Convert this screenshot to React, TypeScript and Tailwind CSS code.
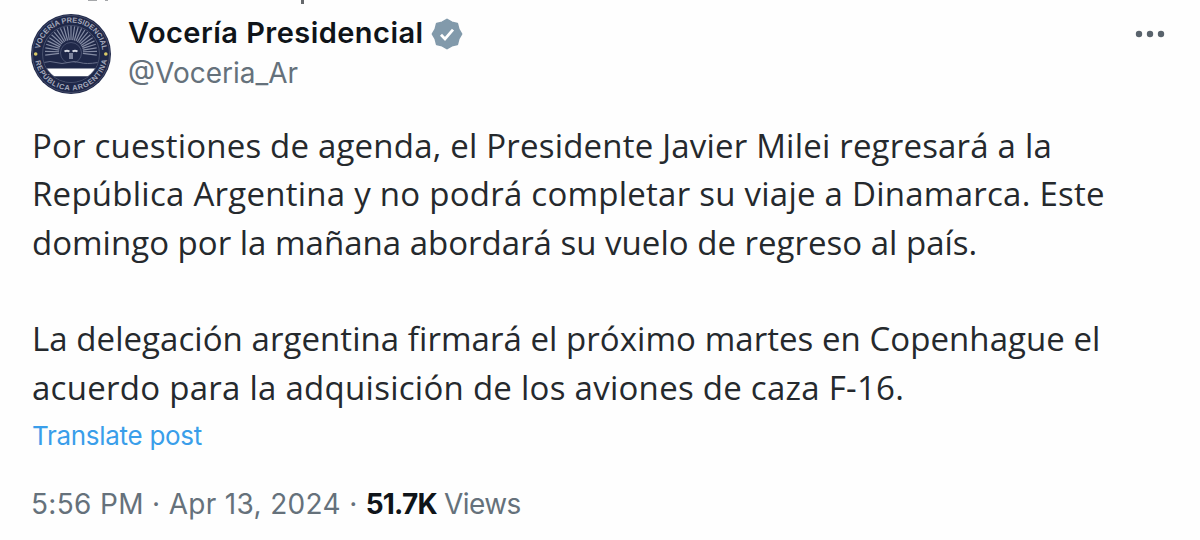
import { type ReactNode } from "react";

const paragraphs = [
  [
    { text: "Por cuestiones de agenda, el Presidente Javier Milei regresará a la", tracking: "tracking-[0.2px]" },
    { text: "República Argentina y no podrá completar su viaje a Dinamarca. Este", tracking: "tracking-[0.25px]" },
    { text: "domingo por la mañana abordará su vuelo de regreso al país.", tracking: "tracking-[0.01px]" },
  ],
  [
    { text: "La delegación argentina firmará el próximo martes en Copenhague el", tracking: "tracking-[0.055px]" },
    { text: "acuerdo para la adquisición de los aviones de caza F-16.", tracking: "tracking-[0.27px]" },
  ],
];

// sunburst spreads just past the horizontal on both sides
const rays = Array.from({ length: 25 }, (_, i) => Math.PI - 0.12 + (i * (Math.PI + 0.24)) / 24);

function Seal() {
  return (
    <svg viewBox="0 0 82 82" className="size-[82px] shrink-0" role="img" aria-label="Vocería Presidencial">
      <defs>
        <path id="seal-top" d="M9.5 41a31.5 31.5 0 0 1 63 0" />
        <path id="seal-bottom" d="M4.6 41a36.4 36.4 0 0 0 72.8 0" />
        <clipPath id="seal-inner">
          <circle cx="41" cy="41" r="28" />
        </clipPath>
      </defs>
      <circle cx="41" cy="41" r="40" fill="#1f2849" />
      <circle cx="41" cy="41" r="38.6" fill="none" stroke="#515975" strokeWidth="0.7" />
      <circle cx="41" cy="41" r="28.5" fill="none" stroke="#515975" strokeWidth="0.8" />
      <g clipPath="url(#seal-inner)">
        {rays.map((a) => (
          <line
            key={a}
            x1={41 + Math.cos(a) * 12}
            y1={39 + Math.sin(a) * 12}
            x2={41 + Math.cos(a) * 26}
            y2={39 + Math.sin(a) * 26}
            stroke="#858ca4"
            strokeWidth="1.2"
          />
        ))}
        <circle cx="41" cy="40" r="10.5" fill="#1f2849" stroke="#59617f" strokeWidth="0.7" />
        <path d="M34.5 38.5q2.5-1.5 5 0M42.5 38.5q2.5-1.5 5 0" fill="none" stroke="#d5d8e2" strokeWidth="2" />
        <path d="M39 40v6h4v-6" fill="#7c839c" />
        <path d="M12 50h58v6H12z" fill="#1f2849" />
        <path d="M14 49.5q6-2 12 0t12 0 12 0 18 0" fill="none" stroke="#69708b" strokeWidth="1" />
        <path d="M12 55.5h58v8H12z" fill="#fff" />
        <path d="M12 63.5h58V72H12z" fill="#1f2849" />
      </g>
      <g fill="#a4a9bb" fontFamily="Liberation Sans, sans-serif" fontSize="7.4" fontWeight="700">
        <text>
          <textPath href="#seal-top" startOffset="5" textLength="90">VOCERÍA PRESIDENCIAL</textPath>
        </text>
        <text>
          <textPath href="#seal-bottom" startOffset="7" textLength="101">REPÚBLICA ARGENTINA</textPath>
        </text>
      </g>
      <circle cx="5.7" cy="41" r="1.8" fill="#d9ca69" />
      <circle cx="75.8" cy="41" r="1.8" fill="#d9ca69" />
    </svg>
  );
}

function VerifiedBadge() {
  return (
    <svg viewBox="0 0 32 32" className="ml-[7px] mt-[1px] size-[32px]" aria-label="Verified account">
      <path
        d="M16 1.6 20.8 4.4 26.2 5.8 27.6 11.2 30.4 16 27.6 20.8 26.2 26.2 20.8 27.6 16 30.4 11.2 27.6 5.8 26.2 4.4 20.8 1.6 16 4.4 11.2 5.8 5.8 11.2 4.4z"
        fill="#829aab"
        stroke="#829aab"
        strokeWidth="2"
        strokeLinejoin="round"
      />
      <path d="m10 16.8 4 4.2 8-9.3" fill="none" stroke="#fff" strokeWidth="2.8" />
    </svg>
  );
}

function Line({ className, children }: { className: string; children: ReactNode }) {
  return <span className={`block whitespace-nowrap ${className}`}>{children}</span>;
}

export default function App() {
  return (
    <article className="h-[540px] w-[1200px] overflow-hidden bg-[#fefefe] font-['Inter',sans-serif] text-[#0f1419]">
      {/* descenders of the line cut off by the top edge */}
      <svg className="block h-[13px] w-full" viewBox="0 0 1200 13" aria-hidden="true">
        <path d="M88 0h9v1h-9zM105 0h3v1h-3z" fill="#a5a7aa" />
        <path d="M301 0h3v4h-3z" fill="#66696c" />
      </svg>

      <header className="flex h-[105px] items-start pl-[30px] pr-[35px]">
        <Seal />
        <div className="ml-[16px] flex-1">
          <div className="flex h-[40px] items-center">
            <h1 className="whitespace-nowrap text-[29px] font-semibold leading-[40px] tracking-[0.46px]">
              Vocería Presidencial
            </h1>
            <VerifiedBadge />
          </div>
          <p className="whitespace-nowrap text-[28px] leading-[40px] text-[#65717b]">@Voceria_Ar</p>
        </div>
        <svg viewBox="0 0 30 8" className="mt-[17px] h-[8px] w-[30px]" fill="#59636c" aria-label="More">
          <circle cx="4" cy="4" r="3.2" />
          <circle cx="15" cy="4" r="3.2" />
          <circle cx="26" cy="4" r="3.2" />
        </svg>
      </header>

      <div className="mt-[4px] space-y-[48px] pl-[32px] font-['Open_Sans',sans-serif] text-[33px] leading-[48.4px] text-[#25292d]">
        {paragraphs.map((lines) => (
          <p key={lines[0].text}>
            {lines.map((line) => (
              <Line key={line.text} className={line.tracking}>
                {line.text}
              </Line>
            ))}
          </p>
        ))}
      </div>

      <a className="mt-[6px] block pl-[32px] text-[26px] leading-[36px] tracking-[-0.3px] text-[#3a9eea]">
        Translate post
      </a>

      <p className="mt-[30px] flex whitespace-pre pl-[31px] text-[28px] leading-[40px] text-[#65717b]">
        <span className="tracking-[0.33px]">5:56 PM · Apr 13, 2024 · </span>
        <span className="font-bold tracking-[-0.8px] text-[#0f1419]">51.7K</span>
        <span className="tracking-[-0.6px]"> Views</span>
      </p>
    </article>
  );
}
